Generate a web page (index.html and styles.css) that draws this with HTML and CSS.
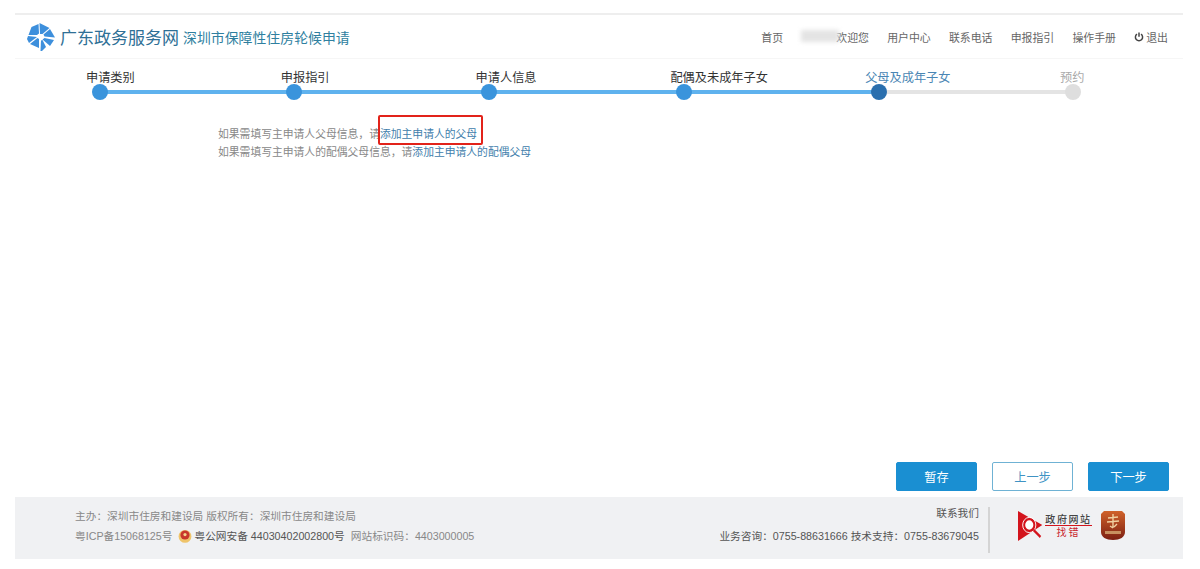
FILE: index.html
```html
<!DOCTYPE html>
<html lang="zh-CN">
<head>
    <meta charset="UTF-8">
    <meta name="viewport" content="width=device-width, initial-scale=1.0">
    <title>深圳市保障性住房轮候申请</title>
    <link rel="stylesheet" href="styles.css">
</head>
<body>
    <div class="page">
        <div class="header">
            <div class="brand">
                <svg class="logo" viewBox="0 0 28 28" width="28" height="28">
                    <g fill="#3d8fdc">
                        <polygon points="13,11 12.5,0 22.5,5 15.5,11"/>
                        <polygon points="16.5,11.5 23,6 28,14.5 17.5,13.5"/>
                        <polygon points="17.5,15 27,17 23,23 15.5,16.5"/>
                        <polygon points="15.5,17 19,24 15,28 13.5,28 14,17.5"/>
                        <polygon points="12,16 12,25 3,21 10.5,15"/>
                        <polygon points="10,14 2,20 0,16 1,13"/>
                        <polygon points="10,12 1.5,12 4.5,4 11.5,1 12,10.5"/>
                    </g>
                </svg>
                <span class="site-name">广东政务服务网</span>
                <span class="app-name">深圳市保障性住房轮候申请</span>
            </div>
            <div class="nav">
                <a>首页</a>
                <a class="welcome"><i class="blur-name"></i>欢迎您</a>
                <a>用户中心</a>
                <a>联系电话</a>
                <a>申报指引</a>
                <a>操作手册</a>
                <a class="logout">
                    <svg viewBox="0 0 10 10" width="10" height="10"><path d="M3 2.2a3.6 3.6 0 1 0 4 0M5 .6v4.2" fill="none" stroke="#444" stroke-width="1.5"/></svg>
                    退出
                </a>
            </div>
        </div>

        <div class="steps">
            <div class="step done"><span>申请类别</span><i></i></div>
            <div class="step done"><span>申报指引</span><i></i></div>
            <div class="step done"><span>申请人信息</span><i></i></div>
            <div class="step done"><span>配偶及未成年子女</span><i></i></div>
            <div class="step current"><span>父母及成年子女</span><i></i></div>
            <div class="step todo"><span>预约</span><i></i></div>
        </div>

        <div class="content">
            <p>如果需填写主申请人父母信息，请<a class="marked">添加主申请人的父母</a></p>
            <p>如果需填写主申请人的配偶父母信息，请<a>添加主申请人的配偶父母</a></p>
        </div>

        <div class="actions">
            <button class="btn">暂存</button>
            <button class="btn btn-line">上一步</button>
            <button class="btn">下一步</button>
        </div>

        <div class="footer">
            <div class="foot-left">
                <p>主办：深圳市住房和建设局 版权所有：深圳市住房和建设局</p>
                <p class="foot-row">
                    <span>粤ICP备15068125号</span>
                    <svg class="police" viewBox="0 0 14 14" width="14" height="14">
                        <circle cx="7" cy="7.4" r="6.4" fill="#efc46a"/>
                        <circle cx="7" cy="6" r="4.6" fill="#c8382c"/>
                        <circle cx="7" cy="5.6" r="1.6" fill="#f2d58a"/>
                    </svg>
                    <span class="beian">粤公网安备 44030402002800号</span>
                    <span>网站标识码：4403000005</span>
                </p>
            </div>
            <div class="foot-right">
                <p>联系我们</p>
                <p>业务咨询：0755-88631666 技术支持：0755-83679045</p>
            </div>
            <div class="foot-logos">
                <svg class="find-icon" viewBox="0 0 30 30" width="26" height="30" preserveAspectRatio="none">
                    <polygon points="0,0 28,14 0,30" fill="#d3141c"/>
                    <circle cx="13" cy="14" r="6" fill="#fff" stroke="#d3141c" stroke-width="2.6"/>
                    <circle cx="13" cy="14" r="7.6" fill="none" stroke="#fff" stroke-width="1"/>
                    <path d="M18 19l8 7" stroke="#d3141c" stroke-width="2.4"/>
                </svg>
                <div class="find-text">
                    <b>政府网站</b>
                    <em>找错</em>
                </div>
                <svg class="shield" viewBox="0 0 26 31" width="26" height="31">
                    <defs>
                        <linearGradient id="shield-fill" x1="0" y1="0" x2="0" y2="1">
                            <stop offset="0" stop-color="#d0622a"/>
                            <stop offset="1" stop-color="#7c1f12"/>
                        </linearGradient>
                    </defs>
                    <path d="M4 1h18l3 3v18c0 5-5 8-12 8S1 27 1 22V4z" fill="url(#shield-fill)"/>
                    <path d="M8 8l10-1M7 12l12-1M13 4v14M13 18l-3-2M17 14l-3 3" fill="none" stroke="#f0d0a0" stroke-width="1.4"/>
                    <rect x="5" y="21" width="16" height="3" fill="#c89060"/>
                </svg>
            </div>
        </div>
    </div>
</body>
</html>
```

FILE: styles.css
```css
* {
    box-sizing: border-box;
}
html, body {
    margin: 0;
    padding: 0;
    background: #fff;
}
body {
    font-family: "Liberation Sans", "Noto Sans CJK SC", sans-serif;
    font-size: 11px;
    color: #777;
}
p {
    margin: 0;
}
.page {
    display: flex;
    flex-direction: column;
    height: 569px;
    margin: 0 17px 0 15px;
    padding: 13px 0 10px;
}

/* header */
.header {
    display: flex;
    align-items: center;
    justify-content: space-between;
    height: 46px;
    border-top: 2px solid #eeeeee;
    border-bottom: 1px solid #f6f6f6;
    padding: 0 15px 0 12px;
}
.brand {
    display: flex;
    align-items: center;
}
.logo {
    margin-right: 5px;
}
.site-name {
    font-size: 17px;
    color: #2f7096;
    margin-right: 4px;
}
.app-name {
    font-size: 13.9px;
    color: #2f7f9f;
}
.nav {
    display: flex;
    align-items: center;
    gap: 18.2px;
    font-size: 10.9px;
    color: #666;
}
.welcome {
    display: flex;
    align-items: center;
    position: relative;
    padding-left: 35px;
}
.blur-name {
    position: absolute;
    left: 0;
    top: 1px;
    width: 38px;
    height: 12px;
    background: #e4e4e4;
    filter: blur(2px);
}
.logout {
    display: flex;
    align-items: center;
    gap: 2px;
}

/* steps */
.steps {
    display: grid;
    grid-template-columns: repeat(5, 194.8px) auto;
    margin: 12px 0 0 71px;
}
.step {
    position: relative;
    font-size: 12.2px;
    line-height: 14px;
    height: 41px;
    white-space: nowrap;
}
.step span {
    display: block;
    color: #333;
}
.step i {
    position: absolute;
    left: 5.5px;
    top: 13px;
    width: 16px;
    height: 16px;
    border-radius: 50%;
    background: #3a94dc;
    z-index: 1;
}
.step::after {
    content: "";
    position: absolute;
    left: 13.5px;
    top: 19px;
    width: 194.8px;
    height: 4px;
    background: #5fb2ee;
}
.step.current span {
    color: #4a86b4;
}
.step.current i {
    background: #2a6fae;
}
.step.current::after {
    background: #e4e4e4;
}
.step.todo span {
    color: #aaa;
}
.step.todo i {
    background: #dedede;
}
.step.todo::after {
    display: none;
}

/* content */
.content {
    flex: 1;
    padding: 13px 0 0 203px;
    font-size: 10.8px;
    line-height: 18px;
    color: #888;
}
.content a {
    color: #3f80ac;
}
.marked {
    position: relative;
}
.marked::after {
    content: "";
    position: absolute;
    left: -2px;
    right: -6px;
    top: -13px;
    height: 26px;
    border: 2px solid #e2231a;
    border-radius: 2px;
}

/* buttons */
.actions {
    display: flex;
    justify-content: flex-end;
    gap: 15px;
    padding-right: 14px;
    margin-bottom: 6px;
}
.btn {
    width: 81px;
    height: 29px;
    border: 1px solid #1a8fd2;
    border-radius: 2px;
    background: #1a8fd2;
    color: #fff;
    font-family: inherit;
    font-size: 12.2px;
    padding: 0;
}
.btn-line {
    background: #fff;
    border-color: #6fb2d4;
    color: #3f93c4;
}

/* footer */
.footer {
    display: flex;
    align-items: center;
    height: 62px;
    background: #f0f1f3;
    padding: 0 57px 0 60px;
    font-size: 10.7px;
    color: #888;
}
.foot-left {
    flex: 1;
    line-height: 20px;
    margin-bottom: 4px;
}
.foot-row {
    display: flex;
    align-items: center;
}
.police {
    margin: 0 2px 0 6px;
}
.beian {
    color: #555;
    margin-right: 6px;
}
.foot-right {
    text-align: right;
    color: #555;
    line-height: 23px;
    padding-right: 9px;
    height: 46px;
    margin-top: 3px;
    border-right: 2px solid #d4d4d4;
}
.foot-right p:first-child {
    margin-top: -5px;
}
.foot-logos {
    display: flex;
    align-items: center;
    margin: 0 0 5px 28px;
}
.find-icon {
    margin-right: 1px;
}
.find-text {
    display: flex;
    flex-direction: column;
    width: 47px;
    text-align: center;
    line-height: 13px;
    margin-right: 8px;
}
.find-text b {
    font-family: "Noto Sans CJK SC", sans-serif;
    font-weight: 500;
    font-size: 10px;
    letter-spacing: 1.6px;
    color: #444;
    border-bottom: 1px solid #d3141c;
}
.find-text em {
    font-style: normal;
    font-size: 10px;
    letter-spacing: 2px;
    color: #c9242a;
}
```
